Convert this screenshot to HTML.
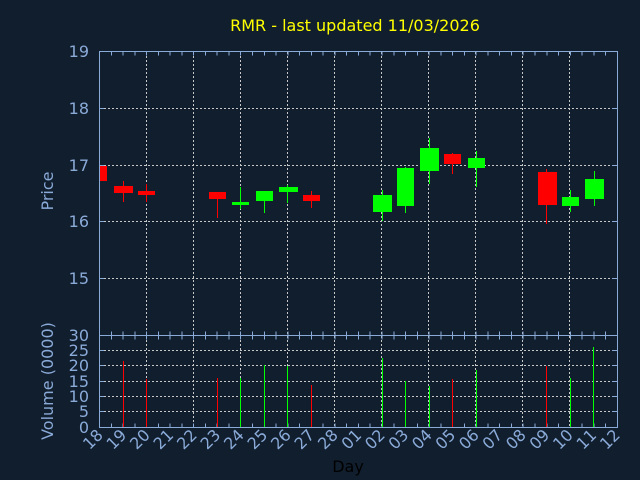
<!DOCTYPE html>
<html><head><meta charset="utf-8"><style>
html,body{margin:0;padding:0;background:#111e2e;}
svg{display:block;font-family:"DejaVu Sans","Liberation Sans",sans-serif;}
</style></head><body>
<svg width="640" height="480" viewBox="0 0 640 480" xmlns="http://www.w3.org/2000/svg">
<rect width="640" height="480" fill="#111e2e"/>
<text x="355" y="31" fill="#ffff00" font-size="16" text-anchor="middle">RMR - last updated 11/03/2026</text>
<g stroke="#c8c8c8" stroke-width="1" stroke-dasharray="2 2" fill="none" shape-rendering="crispEdges">
<path d="M146.5 52V427M193.5 52V427M240.5 52V427M287.5 52V427M334.5 52V427M381.5 52V427M428.5 52V427M475.5 52V427M522.5 52V427M569.5 52V427"/>
<path d="M100 108.5H617M100 165.5H617M100 221.5H617M100 278.5H617"/>
<path d="M100 350.5H617M100 365.5H617M100 381.5H617M100 396.5H617M100 411.5H617"/>
</g>
<g fill="none" stroke="#8aaad8" shape-rendering="crispEdges">
<rect x="99.5" y="51.5" width="518" height="376"/>
<path d="M99 335.5H618"/>
<path d="M99 53.5H618" stroke-width="4" stroke-dasharray="1 10.77" stroke-dashoffset="-11.77"/>
<path d="M99 425.5H618" stroke-width="4" stroke-dasharray="1 10.77" stroke-dashoffset="-11.77"/>
<path d="M99 333.5H618" stroke-width="4" stroke-dasharray="1 10.77" stroke-dashoffset="-11.77"/>
<path d="M99 337.5H618" stroke-width="4" stroke-dasharray="1 10.77" stroke-dashoffset="-11.77"/>
<path d="M99 108.5h5M99 165.5h5M99 221.5h5M99 278.5h5M612 108.5h5M612 165.5h5M612 221.5h5M612 278.5h5"/>
<path d="M99 350.5h5M99 365.5h5M99 381.5h5M99 396.5h5M99 411.5h5M612 350.5h5M612 365.5h5M612 381.5h5M612 396.5h5M612 411.5h5"/>
</g>
<g fill="#8aaad8" font-size="16" text-anchor="end">
<text x="89" y="57">19</text><text x="89" y="114">18</text><text x="89" y="171">17</text><text x="89" y="227">16</text><text x="89" y="284">15</text>
<text x="89" y="341">30</text><text x="89" y="356">25</text><text x="89" y="371">20</text><text x="89" y="387">15</text><text x="89" y="402">10</text><text x="89" y="417">5</text><text x="89" y="433">0</text>
</g>
<text transform="translate(53,191) rotate(-90)" fill="#8aaad8" font-size="16" text-anchor="middle">Price</text>
<text transform="translate(53,381) rotate(-90)" fill="#8aaad8" font-size="16" text-anchor="middle">Volume (0000)</text>
<text x="348" y="472" fill="#000" font-size="16" text-anchor="middle">Day</text>
<g fill="#8aaad8" font-size="16" text-anchor="end">
<text transform="translate(104,436) rotate(-45)">18</text>
<text transform="translate(127.5,436) rotate(-45)">19</text>
<text transform="translate(151,436) rotate(-45)">20</text>
<text transform="translate(174.5,436) rotate(-45)">21</text>
<text transform="translate(198,436) rotate(-45)">22</text>
<text transform="translate(221.5,436) rotate(-45)">23</text>
<text transform="translate(245,436) rotate(-45)">24</text>
<text transform="translate(268.5,436) rotate(-45)">25</text>
<text transform="translate(292,436) rotate(-45)">26</text>
<text transform="translate(315.5,436) rotate(-45)">27</text>
<text transform="translate(339,436) rotate(-45)">28</text>
<text transform="translate(362.5,436) rotate(-45)">01</text>
<text transform="translate(386,436) rotate(-45)">02</text>
<text transform="translate(409.5,436) rotate(-45)">03</text>
<text transform="translate(433,436) rotate(-45)">04</text>
<text transform="translate(456.5,436) rotate(-45)">05</text>
<text transform="translate(480,436) rotate(-45)">06</text>
<text transform="translate(503.5,436) rotate(-45)">07</text>
<text transform="translate(527,436) rotate(-45)">08</text>
<text transform="translate(550.5,436) rotate(-45)">09</text>
<text transform="translate(574,436) rotate(-45)">10</text>
<text transform="translate(597.5,436) rotate(-45)">11</text>
<text transform="translate(621,436) rotate(-45)">12</text>
</g>
<g shape-rendering="crispEdges">
<g fill="#ff0000" stroke="#ff0000" stroke-width="1">
<rect x="100" y="166" width="7" height="15" stroke="none"/>
<path d="M123.5 181V202M146.5 184V202M217.5 199V218M311.5 191V208M452.5 153V174M546.5 169V224" fill="none"/>
<rect x="114" y="186" width="19" height="7" stroke="none"/>
<rect x="138" y="191" width="17" height="4" stroke="none"/>
<rect x="209" y="192" width="17" height="7" stroke="none"/>
<rect x="303" y="195" width="17" height="6" stroke="none"/>
<rect x="444" y="154" width="17" height="10" stroke="none"/>
<rect x="538" y="172" width="19" height="33" stroke="none"/>
</g>
<g fill="#00ff00" stroke="#00ff00" stroke-width="1">
<path d="M240.5 187V209M264.5 191V213M287.5 185V203M382.5 190V221M405.5 167V213M429.5 138V184M476.5 151V187M570.5 190V212M594.5 171V206" fill="none"/>
<rect x="232" y="202" width="17" height="3" stroke="none"/>
<rect x="256" y="191" width="17" height="10" stroke="none"/>
<rect x="279" y="187" width="19" height="5" stroke="none"/>
<rect x="373" y="195" width="19" height="17" stroke="none"/>
<rect x="397" y="168" width="17" height="38" stroke="none"/>
<rect x="420" y="148" width="19" height="23" stroke="none"/>
<rect x="468" y="158" width="17" height="10" stroke="none"/>
<rect x="562" y="197" width="17" height="9" stroke="none"/>
<rect x="585" y="179" width="19" height="20" stroke="none"/>
</g>
<g stroke-width="1" fill="none">
<path stroke="#ff0000" d="M123.5 361V427M146.5 379V427M217.5 378V427M311.5 385V427M452.5 379V427M546.5 366V427"/>
<path stroke="#00ff00" d="M240.5 378V427M264.5 365V427M287.5 366V427M382.5 358V427M405.5 381V427M429.5 386V427M476.5 370V427M570.5 378V427M593.5 347V427"/>
</g>
</g>
</svg>
</body></html>
